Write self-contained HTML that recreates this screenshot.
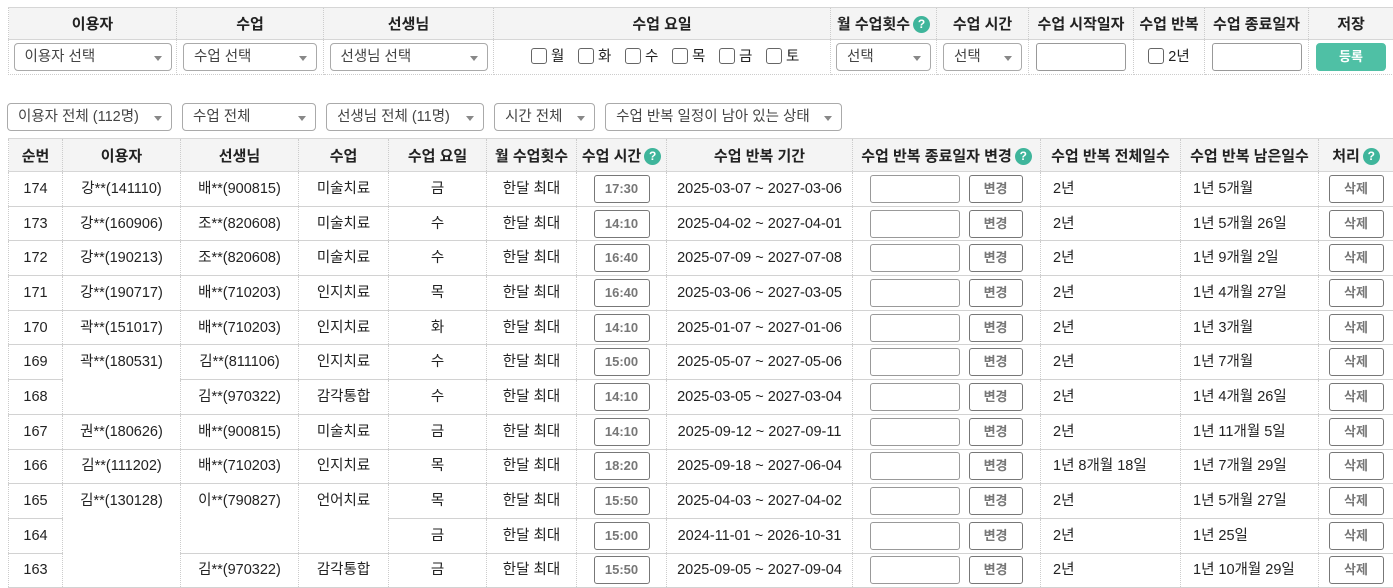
<!DOCTYPE html>
<html><head><meta charset="utf-8"><style>
*{box-sizing:border-box;margin:0;padding:0}
body{width:1393px;height:572px;overflow:hidden;background:#fff;font-family:"Liberation Sans","Noto Sans CJK KR",sans-serif;font-size:14.5px;color:#222;position:relative}
table{border-collapse:collapse;table-layout:fixed;position:absolute;left:8px}
th{background:#f4f4f4;font-weight:bold;font-size:15px;border-left:1px dotted #ccc;border-right:1px dotted #ccc;border-top:1px solid #d6d6d6;border-bottom:1px solid #d6d6d6;text-align:center;white-space:nowrap;padding:0}
td{border-left:1px dotted #ccc;border-right:1px dotted #ccc;border-bottom:1px solid #d2d2d2;text-align:center;white-space:nowrap;padding:0;overflow:hidden;line-height:20px}
.sel{display:inline-block;vertical-align:middle;border:1px solid #aaa;border-radius:4px;height:28px;line-height:26px;text-align:left;padding-left:10px;color:#444;position:relative;background:#fff;font-size:14.5px;font-weight:normal}
.sel:after{content:"";position:absolute;right:9px;top:12px;border-left:4px solid transparent;border-right:4px solid transparent;border-top:5px solid #888}
.cb{display:inline-block;width:16px;height:16px;border:1px solid #666;border-radius:3px;vertical-align:-3px;margin-right:4px}
.day{display:inline-block;width:47px;text-align:left}
.q{display:inline-block;width:17px;height:17px;border-radius:50%;background:#3fb59b;color:#fff;font-size:12px;line-height:17px;text-align:center;vertical-align:1px;margin-left:3px}
.inp{display:inline-block;vertical-align:middle;border:1px solid #999;border-radius:3px;background:#fff;height:28px}
.btn{display:inline-block;vertical-align:middle;border:1px solid #777;border-radius:3px;background:#fff;color:#777;font-weight:bold;font-size:13px;height:28px;line-height:26px;text-align:center}
#top td{border-bottom:1px dotted #ccc}
#list td{height:34.7px}
.l{text-align:left;padding-left:12px}
.top{vertical-align:top;padding-top:7px}
</style></head><body>
<table id="top" style="top:7px;width:1385px">
<colgroup><col style="width:168px"><col style="width:147px"><col style="width:170px"><col style="width:337px"><col style="width:106px"><col style="width:92px"><col style="width:105px"><col style="width:71px"><col style="width:104px"><col style="width:85px"></colgroup>
<tr style="height:32px"><th>이용자</th><th>수업</th><th>선생님</th><th>수업 요일</th><th>월 수업횟수<span class="q">?</span></th><th>수업 시간</th><th>수업 시작일자</th><th>수업 반복</th><th>수업 종료일자</th><th>저장</th></tr>
<tr style="height:35px"><td><span class="sel" style="width:158px">이용자 선택</span></td><td><span class="sel" style="width:134px">수업 선택</span></td><td><span class="sel" style="width:158px">선생님 선택</span></td>
<td style="text-align:left;padding-left:37px"><span class="day"><span class="cb"></span>월</span><span class="day"><span class="cb"></span>화</span><span class="day"><span class="cb"></span>수</span><span class="day"><span class="cb"></span>목</span><span class="day"><span class="cb"></span>금</span><span class="day"><span class="cb"></span>토</span></td>
<td><span class="sel" style="width:95px">선택</span></td><td><span class="sel" style="width:79px">선택</span></td><td><span class="inp" style="width:90px"></span></td><td><span class="cb"></span>2년</td><td><span class="inp" style="width:90px"></span></td>
<td><span class="btn" style="width:70px;background:#4fc0a5;border-color:#4fc0a5;color:#fff;border-radius:4px">등록</span></td></tr>
</table>
<div style="position:absolute;top:103px;left:7px">
<span class="sel" style="width:165px">이용자 전체 (112명)</span>
<span class="sel" style="width:134px;margin-left:6px">수업 전체</span>
<span class="sel" style="width:158px;margin-left:6px">선생님 전체 (11명)</span>
<span class="sel" style="width:101px;margin-left:6px">시간 전체</span>
<span class="sel" style="width:237px;margin-left:6px">수업 반복 일정이 남아 있는 상태</span>
</div>
<table id="list" style="top:138px;width:1385px">
<colgroup><col style="width:54px"><col style="width:118px"><col style="width:118px"><col style="width:90px"><col style="width:98px"><col style="width:90px"><col style="width:90px"><col style="width:186px"><col style="width:188px"><col style="width:140px"><col style="width:138px"><col style="width:75px"></colgroup>
<tr style="height:33px"><th>순번</th><th>이용자</th><th>선생님</th><th>수업</th><th>수업 요일</th><th>월 수업횟수</th><th>수업 시간<span class="q">?</span></th><th>수업 반복 기간</th><th>수업 반복 종료일자 변경<span class="q">?</span></th><th>수업 반복 전체일수</th><th>수업 반복 남은일수</th><th>처리<span class="q">?</span></th></tr>
<tr><td>174</td><td>강**(141110)</td><td>배**(900815)</td><td>미술치료</td><td>금</td><td>한달 최대</td><td><span class="btn" style="width:56px">17:30</span></td><td>2025-03-07 ~ 2027-03-06</td><td><span class="inp" style="width:90px"></span> &nbsp;<span class="btn" style="width:54px">변경</span></td><td class="l">2년</td><td class="l">1년 5개월</td><td><span class="btn" style="width:55px">삭제</span></td></tr>
<tr><td>173</td><td>강**(160906)</td><td>조**(820608)</td><td>미술치료</td><td>수</td><td>한달 최대</td><td><span class="btn" style="width:56px">14:10</span></td><td>2025-04-02 ~ 2027-04-01</td><td><span class="inp" style="width:90px"></span> &nbsp;<span class="btn" style="width:54px">변경</span></td><td class="l">2년</td><td class="l">1년 5개월 26일</td><td><span class="btn" style="width:55px">삭제</span></td></tr>
<tr><td>172</td><td>강**(190213)</td><td>조**(820608)</td><td>미술치료</td><td>수</td><td>한달 최대</td><td><span class="btn" style="width:56px">16:40</span></td><td>2025-07-09 ~ 2027-07-08</td><td><span class="inp" style="width:90px"></span> &nbsp;<span class="btn" style="width:54px">변경</span></td><td class="l">2년</td><td class="l">1년 9개월 2일</td><td><span class="btn" style="width:55px">삭제</span></td></tr>
<tr><td>171</td><td>강**(190717)</td><td>배**(710203)</td><td>인지치료</td><td>목</td><td>한달 최대</td><td><span class="btn" style="width:56px">16:40</span></td><td>2025-03-06 ~ 2027-03-05</td><td><span class="inp" style="width:90px"></span> &nbsp;<span class="btn" style="width:54px">변경</span></td><td class="l">2년</td><td class="l">1년 4개월 27일</td><td><span class="btn" style="width:55px">삭제</span></td></tr>
<tr><td>170</td><td>곽**(151017)</td><td>배**(710203)</td><td>인지치료</td><td>화</td><td>한달 최대</td><td><span class="btn" style="width:56px">14:10</span></td><td>2025-01-07 ~ 2027-01-06</td><td><span class="inp" style="width:90px"></span> &nbsp;<span class="btn" style="width:54px">변경</span></td><td class="l">2년</td><td class="l">1년 3개월</td><td><span class="btn" style="width:55px">삭제</span></td></tr>
<tr><td>169</td><td rowspan="2" class="top">곽**(180531)</td><td>김**(811106)</td><td>인지치료</td><td>수</td><td>한달 최대</td><td><span class="btn" style="width:56px">15:00</span></td><td>2025-05-07 ~ 2027-05-06</td><td><span class="inp" style="width:90px"></span> &nbsp;<span class="btn" style="width:54px">변경</span></td><td class="l">2년</td><td class="l">1년 7개월</td><td><span class="btn" style="width:55px">삭제</span></td></tr>
<tr><td>168</td><td>김**(970322)</td><td>감각통합</td><td>수</td><td>한달 최대</td><td><span class="btn" style="width:56px">14:10</span></td><td>2025-03-05 ~ 2027-03-04</td><td><span class="inp" style="width:90px"></span> &nbsp;<span class="btn" style="width:54px">변경</span></td><td class="l">2년</td><td class="l">1년 4개월 26일</td><td><span class="btn" style="width:55px">삭제</span></td></tr>
<tr><td>167</td><td>권**(180626)</td><td>배**(900815)</td><td>미술치료</td><td>금</td><td>한달 최대</td><td><span class="btn" style="width:56px">14:10</span></td><td>2025-09-12 ~ 2027-09-11</td><td><span class="inp" style="width:90px"></span> &nbsp;<span class="btn" style="width:54px">변경</span></td><td class="l">2년</td><td class="l">1년 11개월 5일</td><td><span class="btn" style="width:55px">삭제</span></td></tr>
<tr><td>166</td><td>김**(111202)</td><td>배**(710203)</td><td>인지치료</td><td>목</td><td>한달 최대</td><td><span class="btn" style="width:56px">18:20</span></td><td>2025-09-18 ~ 2027-06-04</td><td><span class="inp" style="width:90px"></span> &nbsp;<span class="btn" style="width:54px">변경</span></td><td class="l">1년 8개월 18일</td><td class="l">1년 7개월 29일</td><td><span class="btn" style="width:55px">삭제</span></td></tr>
<tr><td>165</td><td rowspan="3" class="top">김**(130128)</td><td rowspan="2" class="top">이**(790827)</td><td rowspan="2" class="top">언어치료</td><td>목</td><td>한달 최대</td><td><span class="btn" style="width:56px">15:50</span></td><td>2025-04-03 ~ 2027-04-02</td><td><span class="inp" style="width:90px"></span> &nbsp;<span class="btn" style="width:54px">변경</span></td><td class="l">2년</td><td class="l">1년 5개월 27일</td><td><span class="btn" style="width:55px">삭제</span></td></tr>
<tr><td>164</td><td>금</td><td>한달 최대</td><td><span class="btn" style="width:56px">15:00</span></td><td>2024-11-01 ~ 2026-10-31</td><td><span class="inp" style="width:90px"></span> &nbsp;<span class="btn" style="width:54px">변경</span></td><td class="l">2년</td><td class="l">1년 25일</td><td><span class="btn" style="width:55px">삭제</span></td></tr>
<tr><td>163</td><td>김**(970322)</td><td>감각통합</td><td>금</td><td>한달 최대</td><td><span class="btn" style="width:56px">15:50</span></td><td>2025-09-05 ~ 2027-09-04</td><td><span class="inp" style="width:90px"></span> &nbsp;<span class="btn" style="width:54px">변경</span></td><td class="l">2년</td><td class="l">1년 10개월 29일</td><td><span class="btn" style="width:55px">삭제</span></td></tr>
</table>
</body></html>
